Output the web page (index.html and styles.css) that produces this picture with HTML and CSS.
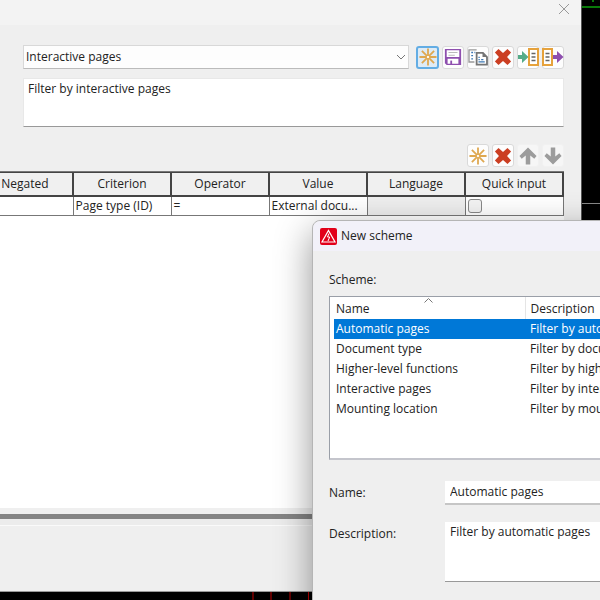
FILE: index.html
```
<!DOCTYPE html>
<html lang="en">
<head>
<meta charset="utf-8">
<title>Filter</title>
<link rel="stylesheet" href="styles.css">
</head>
<body>
<svg class="defs" aria-hidden="true">
  <symbol id="new" viewBox="0 0 20 20"><path d="M10 .5v19M.5 10h19M3.200 3.200l13.600 13.600M16.800 3.200l-13.600 13.600" stroke="#dfa850" stroke-width="2" fill="none"/><circle cx="10" cy="10" r="1.800" fill="#fff" stroke="#dfa850"/></symbol>
  <symbol id="delete" viewBox="0 0 20 20"><path d="M5 1l5 4.500L15 1l4 4-4.500 5 4.500 5-4 4-5-4.500L5 19l-4-4 4.500-5L1 5z" fill="#cb3e22"/></symbol>
  <symbol id="save" viewBox="0 0 20 20"><path d="M1 1h18v18H3l-2-2z" fill="#8e4fae"/><path d="M3 2.500h14v7.500H3zM4 12h12v5.500H4z" fill="#fff"/><path d="M5 5h10M5 8h7" stroke="#bbb" stroke-width="1.200"/><path d="M8 14v4" stroke="#8e4fae" stroke-width="2"/></symbol>
  <symbol id="copy" viewBox="0 0 24 20"><path d="M10.500 2H2v13.500h6" fill="#fff" stroke="#999" stroke-width="1.500"/><path d="M4.500 5h2M4.500 8.500h2M4.500 12h2M8 5h1" stroke="#3c78b4" stroke-width="1.400"/><path d="M10.500 5.500h7L22 10v8.500H10.500z" fill="#fff" stroke="#757575" stroke-width="2"/><path d="M17 5v5h5z" fill="#757575"/><path d="M12.500 10.500H14M12.500 13H14M15.500 13H18M12.500 15.500h7" stroke="#3c78b4" stroke-width="1.300"/></symbol>
  <symbol id="import" viewBox="0 0 22 20"><path d="M1 8h4V4l6.500 6L5 16v-4H1z" fill="#55ac88"/><path d="M12 2h9v16h-9z" fill="#fff" stroke="#e6a23c" stroke-width="2"/><path d="M14.500 6.500h4M14.500 10h4M14.500 13.500h4" stroke="#666" stroke-width="1.300"/></symbol>
  <symbol id="export" viewBox="0 0 22 20"><path d="M1 2h9v16H1z" fill="#fff" stroke="#e6a23c" stroke-width="2"/><path d="M3.500 6.500h4M3.500 10h4M3.500 13.500h4" stroke="#666" stroke-width="1.300"/><path d="M11 8h4V4l6.500 6L15 16v-4h-4z" fill="#8e4fae"/></symbol>
  <symbol id="up" viewBox="0 0 20 20"><path d="M10 .5L19.500 10 17 13l-4.500-3.500V19.500h-5V9.500L3 13 .5 10z" fill="#9c9c9c"/></symbol>
  <symbol id="down" viewBox="0 0 20 20"><path d="M10 19.500L19.500 10 17 7l-4.500 3.500V.5h-5v10L3 7 .5 10z" fill="#9c9c9c"/></symbol>
</svg>

<div class="desktop">
  <svg class="drawing-right" width="18" height="210" aria-hidden="true"><path d="M0 7h18" stroke="#0a7a0a" stroke-width="2"/><path d="M11 0v2" stroke="#0a7a0a" stroke-width="2"/><path d="M0 203.500h18" stroke="#888"/></svg>
  <svg class="drawing-bottom" width="60" height="8" aria-hidden="true"><path d="M1 0v8M19 0v8M38 0v8" stroke="#600000" stroke-width="2"/><path d="M56.500 0v8" stroke="#b00"/></svg>

  <main class="window">
    <header class="titlebar">
      <button class="close" aria-label="Close"><svg width="12" height="12"><path d="M1 1l10 10M11 1L1 11" stroke="#999"/></svg></button>
    </header>
    <section class="scheme">
      <div class="picker">
        <div class="combo">
          <select aria-label="Scheme"><option>Interactive pages</option></select>
          <svg class="chevron" width="10" height="6" aria-hidden="true"><path d="M1 1l4 4 4-4" fill="none" stroke="#777"/></svg>
        </div>
        <div class="tools">
          <button class="tool active" aria-label="New"><svg width="18" height="18"><use href="#new"/></svg></button>
          <button class="tool" aria-label="Save"><svg width="18" height="18"><use href="#save"/></svg></button>
          <button class="tool" aria-label="Copy"><svg width="22" height="18"><use href="#copy"/></svg></button>
          <button class="tool" aria-label="Delete"><svg width="18" height="18"><use href="#delete"/></svg></button>
          <button class="tool" aria-label="Import"><svg width="22" height="20"><use href="#import"/></svg></button>
          <button class="tool" aria-label="Export"><svg width="22" height="20"><use href="#export"/></svg></button>
        </div>
      </div>
      <textarea class="summary" aria-label="Scheme description">Filter by interactive pages</textarea>
      <div class="tools row-tools">
        <button class="tool" aria-label="New criterion"><svg width="18" height="18"><use href="#new"/></svg></button>
        <button class="tool" aria-label="Delete criterion"><svg width="18" height="18"><use href="#delete"/></svg></button>
        <button class="tool" aria-label="Move up" disabled><svg width="18" height="18"><use href="#up"/></svg></button>
        <button class="tool" aria-label="Move down" disabled><svg width="18" height="18"><use href="#down"/></svg></button>
      </div>
    </section>
    <div class="sheet">
      <table class="criteria">
        <thead><tr><th class="first">Negated</th><th>Criterion</th><th>Operator</th><th>Value</th><th>Language</th><th>Quick input</th></tr></thead>
        <tbody><tr><td></td><td>Page type (ID)</td><td>=</td><td>External docu...</td><td class="off"></td><td><input type="checkbox" aria-label="Quick input"></td></tr></tbody>
      </table>
    </div>
    <div class="splitter"></div>
    <footer class="footer"></footer>
  </main>

  <section class="dialog" role="dialog" aria-labelledby="dialog-title">
    <header class="dialog-title">
      <svg width="17" height="17" viewBox="0 0 17 17" aria-hidden="true"><rect width="17" height="17" rx="2" fill="#e2001a"/><path d="M8.500 2.500L15 14H2z" fill="none" stroke="#fff" stroke-width="1.200"/><path d="M9 5.500L7.500 9h2.200L8 13" fill="none" stroke="#fff"/></svg>
      <h1 id="dialog-title">New scheme</h1>
    </header>
    <div class="dialog-body">
      <p class="caption">Scheme:</p>
      <div class="list">
        <svg class="sort" width="9" height="5" aria-hidden="true"><path d="M.5 4.500l4-4 4 4" fill="none" stroke="#777"/></svg>
        <table>
          <thead><tr><th class="name">Name</th><th>Description</th></tr></thead>
          <tbody>
            <tr class="selected"><td>Automatic pages</td><td>Filter by automatic pages</td></tr>
            <tr><td>Document type</td><td>Filter by document type</td></tr>
            <tr><td>Higher-level functions</td><td>Filter by higher-level functions</td></tr>
            <tr><td>Interactive pages</td><td>Filter by interactive pages</td></tr>
            <tr><td>Mounting location</td><td>Filter by mounting location</td></tr>
          </tbody>
        </table>
      </div>
      <form class="form">
        <label for="name">Name:</label>
        <input id="name" type="text" value="Automatic pages">
        <label for="description">Description:</label>
        <textarea id="description">Filter by automatic pages</textarea>
      </form>
    </div>
  </section>
</div>
</body>
</html>
```
FILE: styles.css
```
* { box-sizing: border-box; }
body, button, select, input, textarea {
  font-family: "Open Sans", "Noto Sans", sans-serif;
  font-size: 12px;
  line-height: 16px;
  color: #222;
}
body { margin: 0; overflow: hidden; }
svg { display: block; }
button { padding: 0; }
input, textarea, select { border: 0; border-radius: 0; margin: 0; outline: 0; }
textarea { display: block; width: 100%; resize: none; overflow: hidden; background: #fff; }
table { border-collapse: collapse; table-layout: fixed; width: 100%; }
th { font-weight: 400; }
.defs { position: absolute; width: 0; height: 0; }

.desktop { position: relative; height: 100vh; background: #000; overflow: hidden; }
.drawing-right { position: absolute; top: 0; right: 0; }
.drawing-bottom { position: absolute; bottom: 0; left: 252px; }

.window {
  position: absolute;
  inset: 0 18px 8px 0;
  display: flex;
  flex-direction: column;
  background: #efefef;
  border-right: 1px solid #555;
  border-bottom: 1px solid #999;
}
.titlebar { display: flex; justify-content: flex-end; height: 25px; padding: 3px 11px; background: #f3f3f3; }
.close { display: flex; height: 12px; border: 0; background: none; }

.scheme { padding: 20px 17px 0 23px; }
.picker { display: flex; gap: 8px; align-items: center; }
.combo { position: relative; flex: 1; }
.combo select {
  display: block;
  width: 100%;
  height: 24px;
  padding: 0 2px;
  appearance: none;
  background: #fdfdfd;
  border: 1px solid #d8d8d8;
  border-bottom-color: #bbb;
}
.chevron { position: absolute; right: 3px; top: 9px; }
.tools { display: flex; gap: 2px; }
.tool {
  display: flex;
  align-items: center;
  justify-content: center;
  width: 23px;
  height: 23px;
  margin-right: -1px;
  background: #fdfdfd;
  border: 1px solid #d9d9d9;
  border-radius: 3px;
}
.tools { gap: 3px; }
.tool { width: 22px; margin-right: 0; }
.tool svg { flex: none; }
.tool.active { width: 23px; background: #dfebf5; border: 2px solid #63ade4; }
.tool:disabled { background: #f6f6f6; border-color: #f1f1f1; }
.picker { gap: 7px; }
.summary { height: 49px; margin-top: 9px; padding: 2px 4px; border: 1px solid #e8e8e8; border-bottom-color: #999; }
.row-tools { justify-content: flex-end; margin-top: 17px; }

.sheet { flex: 1; margin: 4px 17px 0 0; background: #fff; border-top: 1px solid #777; }
.criteria th { height: 23px; padding: 0; border: 1px solid #444; border-width: 1px 2px 2px; background: #f0f0f0; }
.criteria th.first { width: 73px; padding-right: 22px; border-left: 0; }
.criteria td { height: 20px; padding: 0 2px; border: 1px solid #777; white-space: nowrap; }
.criteria td:first-child { border-left: 0; }
.criteria td.off { background: #eee; }
.criteria input {
  display: block;
  width: 14px;
  height: 14px;
  appearance: none;
  border: 1px solid #888;
  border-radius: 3px;
  background: #f3f3f3;
}
.splitter { height: 11px; border: solid #efefef; border-width: 6px 0 0; background: #848484; }
.footer { height: 72px; border-top: 6px solid #ececec; box-shadow: inset 0 1px #fafafa; }

.dialog {
  position: absolute;
  inset: 220px -140px -60px 312px;
  background: #efefef;
  border: 1px solid #b5b5b5;
  border-radius: 8px;
  box-shadow: 0 12px 36px rgba(0, 0, 0, .42);
}
.dialog-title { display: flex; align-items: center; gap: 4px; height: 30px; padding: 0 7px; background: #f2f1f9; border-radius: 8px 8px 0 0; }
.dialog-title h1 { margin: 0; font-size: 12px; font-weight: 400; }
.dialog-body { padding: 21px 16px; }
.caption { margin: 0 0 8px; }
.list { position: relative; height: 164px; padding-left: 4px; background: #fff; border: 1px solid #9a9fa8; border-bottom: 2px solid #c4c5cc; }
.sort { position: absolute; left: 94px; top: 1px; }
.list th { height: 22px; padding: 2px 0 0 5px; text-align: left; }
.list th.name { width: 191px; padding-left: 2px; border-right: 1px solid #e5e5e5; }
.list td { height: 20px; padding: 0 0 0 5px; white-space: nowrap; }
.list td:first-child { padding-left: 2px; }
.list .selected { background: #0078d7; color: #fff; }
.form { display: grid; grid-template-columns: 116px 1fr; row-gap: 17px; margin-top: 21px; }
.form label { padding-top: 4px; }
.form input { height: 24px; padding: 0 5px 2px; background: #fff; border-bottom: 2px solid #c6c6c6; }
.form textarea { height: 60px; padding: 2px 5px; border-bottom: 1px solid #999; }
```
